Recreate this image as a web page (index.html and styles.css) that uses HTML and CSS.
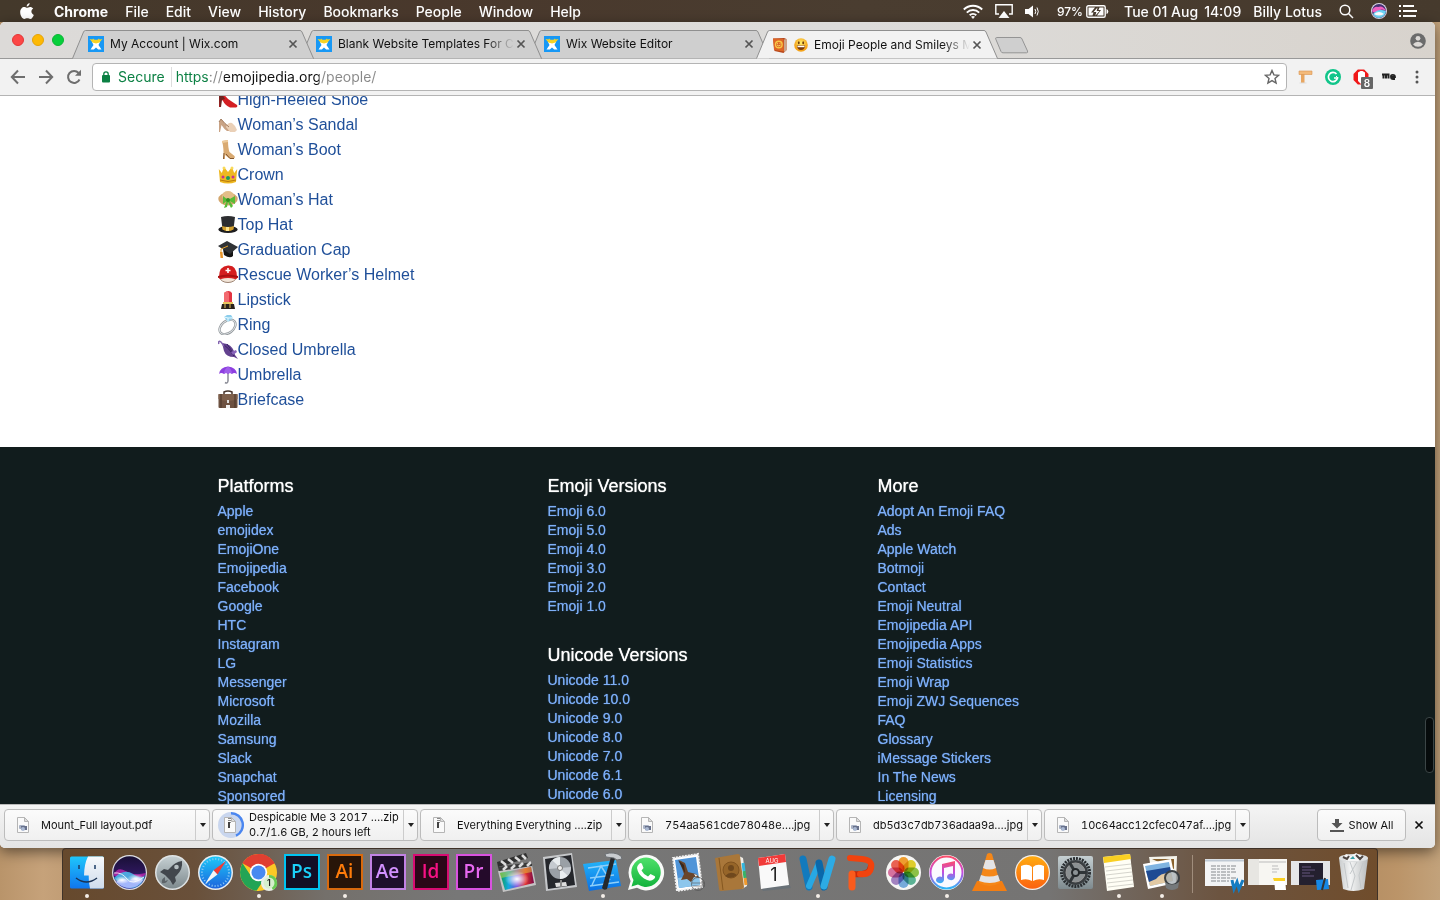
FILE: index.html
```html
<!DOCTYPE html>
<html lang="en">
<head>
<meta charset="utf-8">
<title>Emoji People and Smileys</title>
<link rel="stylesheet" href="styles.css">
</head>
<body>
<svg class="defs" aria-hidden="true">
  <defs>
    <symbol id="wix" viewBox="0 0 16 16">
      <rect width="16" height="16" fill="#1798f5"/>
      <path d="M4 6h8l-1.500 3L13.500 13.500h-3.300L8 11.500l-2.200 2H2.500L5.500 9z" fill="#fff"/>
      <path d="M1.500 3l3 .6L5 2.500l1.500 1.200h3L11 2.500l.5 1.100 3-.6-3 3.600L8 7.500 4.500 6.600z" fill="#f5d327"/>
    </symbol>
    <symbol id="tab-back" viewBox="0 0 242 29">
      <path d="M.5 28.500L11.500 2Q12.200.5 13.500.5H228Q229.300.5 230 2L241.500 28.500"/>
    </symbol>
    <symbol id="close" viewBox="0 0 10 10"><path d="M1.500 1.500l7 7M8.500 1.500l-7 7" stroke="currentColor" stroke-width="1.700" fill="none"/></symbol>
    <symbol id="file-img" viewBox="0 0 14 16">
      <path d="M1.500.5h7l4 4v11h-11z" fill="#fafafa" stroke="#b5b5b5"/><path d="M8.500.5v4h4z" fill="#ddd" stroke="#b5b5b5"/>
      <rect x="3" y="8" width="6" height="4" rx="1" fill="#a9b2c4"/><path d="M5 9h6v4H5z" fill="#68718b"/><circle cx="7" cy="12" r="2" fill="#aab9d3"/>
    </symbol>
    <symbol id="file-zip" viewBox="0 0 14 16">
      <path d="M1.500.5h7l4 4v11h-11z" fill="#fafafa" stroke="#b5b5b5"/><path d="M8.500.5v4h4z" fill="#ddd" stroke="#b5b5b5"/>
      <path d="M6.500 1v5" stroke="#888" stroke-width="3" stroke-dasharray="1 1"/><rect x="5" y="5" width="2" height="6" fill="#444"/>
    </symbol>
    <symbol id="caret" viewBox="0 0 6 4"><path d="M0 0h6L3 4z" fill="#222"/></symbol>
    <linearGradient id="gFinder" x2="0" y2="1"><stop stop-color="#1fc6fb"/><stop offset="1" stop-color="#1076ee"/></linearGradient>
    <linearGradient id="gFinder2" x2="0" y2="1"><stop stop-color="#f7f9fb"/><stop offset="1" stop-color="#cfdcec"/></linearGradient>
    <linearGradient id="gSilver" x2="0" y2="1"><stop stop-color="#c5cfd2"/><stop offset="1" stop-color="#7e8a8e"/></linearGradient>
    <linearGradient id="gSafari" x2="0" y2="1"><stop stop-color="#1cc8f8"/><stop offset="1" stop-color="#1c63dd"/></linearGradient>
    <linearGradient id="gGreen" x2="0" y2="1"><stop stop-color="#4fe06a"/><stop offset="1" stop-color="#12b33c"/></linearGradient>
    <linearGradient id="gBooks" x2="0" y2="1"><stop stop-color="#ffab10"/><stop offset="1" stop-color="#fb6210"/></linearGradient>
    <linearGradient id="gTunes" x2="0" y2="1"><stop stop-color="#fb4d6a"/><stop offset=".5" stop-color="#c34be0"/><stop offset="1" stop-color="#2fb6f6"/></linearGradient>
    <linearGradient id="gRainbow"><stop stop-color="#0b9f50"/><stop offset=".25" stop-color="#14a8e0"/><stop offset=".5" stop-color="#7a50e0"/><stop offset=".75" stop-color="#e2302c"/><stop offset="1" stop-color="#7a0a4a"/></linearGradient>
    <radialGradient id="gWhite"><stop stop-color="#fff"/><stop offset="1" stop-color="#fff" stop-opacity="0"/></radialGradient>
    <linearGradient id="gCode" x2="0" y2="1"><stop stop-color="#23b6fb"/><stop offset="1" stop-color="#0b6fe2"/></linearGradient>
    <linearGradient id="gSiri" x2="0" y2="1"><stop stop-color="#191036"/><stop offset=".45" stop-color="#2b1657"/><stop offset="1" stop-color="#2f3aa8"/></linearGradient>
    <linearGradient id="gTrash"><stop stop-color="#c9cccd"/><stop offset=".4" stop-color="#f3f4f4"/><stop offset="1" stop-color="#b9bcbd"/></linearGradient>
    <radialGradient id="gFace" cy=".35"><stop stop-color="#ffee6b"/><stop offset="1" stop-color="#f5a31a"/></radialGradient>
  </defs>
</svg>

<header class="menubar">
  <nav class="menus" aria-label="Menu bar">
    <button class="menu menu-apple" aria-label="Apple"><svg width="14" height="17" viewBox="0 0 14 17"><path d="M9.600 0c.2 1.600-1.200 3.500-2.900 3.500C6.500 1.900 8 .2 9.600 0zM7 4.800c.7 0 1.700-.9 3.100-.9 1.200 0 2.400.6 3.100 1.700-2.700 1.500-2.200 5.300.6 6.300-.5 1.500-1.900 4.100-3.500 4.100-1.200 0-1.600-.7-3-.7s-1.900.7-3 .7C2.200 16 .2 12.600.2 9.300c0-3.300 2-5.300 4.100-5.300 1.200 0 2.100.8 2.700.8z" fill="#fff"/></svg></button>
    <button class="menu menu-app">Chrome</button>
    <button class="menu">File</button>
    <button class="menu">Edit</button>
    <button class="menu">View</button>
    <button class="menu">History</button>
    <button class="menu">Bookmarks</button>
    <button class="menu">People</button>
    <button class="menu">Window</button>
    <button class="menu">Help</button>
  </nav>
  <div class="status">
    <svg width="20" height="15" viewBox="0 0 20 15" fill="none" stroke="#fff" stroke-width="1.900"><path d="M.8 5.500a13 13 0 0 1 18.400 0M3.800 8.600a8.800 8.800 0 0 1 12.400 0M6.700 11.300a4.700 4.700 0 0 1 6.600 0"/><path d="M10 15l-2-2.200a3 3 0 0 1 4 0z" fill="#fff" stroke="none"/></svg>
    <svg width="18" height="14" viewBox="0 0 18 14"><path d="M4 10H.8V.8h16.400V10H14" fill="none" stroke="#fff" stroke-width="1.400"/><path d="M9 7l5.500 7h-11z" fill="#fff"/></svg>
    <svg width="14" height="13" viewBox="0 0 14 13"><path d="M0 4h3.500L8 .5v12L3.500 9H0z" fill="#fff"/><path d="M10 4q1.500 2.500 0 5M12 2.500q2.500 4 0 8" fill="none" stroke="#fff"/></svg>
    <span class="charge">97% <svg width="23" height="13" viewBox="0 0 23 13"><rect x=".8" y=".8" width="18.400" height="11.400" rx="1.500" fill="none" stroke="#fff" stroke-width="1.400"/><path d="M2.500 2.500H9L5 7.500H7.500L6.500 10.500H2.500zM17.500 10.500H11l4-5.500H12.500l1-2.500h4z" fill="#fff"/><path d="M11.500 2.500L7.500 7h2.800l-1 3.800L13.500 6h-2.800z" fill="#fff"/><path d="M20.500 4v5q1.800-.5 1.800-2.500T20.500 4z" fill="#fff"/></svg></span>
    <span class="clock"><span>Tue 01 Aug</span><span>14:09</span></span>
    <span>Billy Lotus</span>
    <svg class="search" width="15" height="15" viewBox="0 0 15 15" fill="none" stroke="#fff" stroke-width="1.500"><circle cx="6" cy="6" r="4.800"/><path d="M9.500 9.500l4.500 4.500"/></svg>
    <svg width="16" height="16" viewBox="0 0 16 16"><circle cx="8" cy="8" r="8" fill="#dcd8ea"/><circle cx="8" cy="8" r="7" fill="#453073"/><path d="M1 8q2-5 6-4 5-2 8 4Q11 5 7 8T1 8z" fill="#f05fc0"/><path d="M2 11q5-6 13-3-1 6-7 7-4 0-6-4z" fill="#6fd7f7"/><path d="M3 11q5-4 10 0-5 3-10 0z" fill="#fff"/></svg>
    <svg width="18" height="12" viewBox="0 0 18 12" stroke="#fff" stroke-width="2"><path d="M0 1h2M4 1h11M0 6h2M4 6h14M0 11h2M4 11h13"/></svg>
  </div>
</header>

<main class="window">
  <div class="tabstrip">
    <div class="lights"><button class="light red" aria-label="Close window"></button><button class="light amber" aria-label="Minimise"></button><button class="light green" aria-label="Zoom"></button></div>
    <div class="tabs" role="tablist">
      <div class="tab t1" role="tab"><svg class="shape"><use href="#tab-back"/></svg><svg class="fav"><use href="#wix"/></svg><span class="title">My Account | Wix.com</span><button class="x" aria-label="Close tab"><svg width="10" height="10"><use href="#close"/></svg></button></div>
      <div class="tab t2" role="tab"><svg class="shape"><use href="#tab-back"/></svg><svg class="fav"><use href="#wix"/></svg><span class="title">Blank Website Templates For C</span><button class="x" aria-label="Close tab"><svg width="10" height="10"><use href="#close"/></svg></button></div>
      <div class="tab t3" role="tab"><svg class="shape"><use href="#tab-back"/></svg><svg class="fav"><use href="#wix"/></svg><span class="title">Wix Website Editor</span><button class="x" aria-label="Close tab"><svg width="10" height="10"><use href="#close"/></svg></button></div>
      <div class="tab active" role="tab" aria-selected="true"><svg class="shape"><use href="#tab-back"/></svg>
        <svg class="fav" viewBox="0 0 16 16"><path d="M1 1.500l11-.5 2.500 1V13l-3 3-9-2z" fill="#b5471b"/><path d="M1 1.500l10.500.5.5 12.500L2 13z" fill="#dd6526"/><path d="M12 2.500l2.500-.5v11.500L12 15z" fill="#c9a58c"/><circle cx="6.800" cy="7.500" r="3.300" fill="none" stroke="#f9c846" stroke-width="1.400"/><path d="M5 8q1.800 2 3.600 0M5.500 6v.8M8 6v.8" stroke="#f9d866" fill="none"/></svg>
        <span class="title"><svg class="smile" width="14" height="14" viewBox="0 0 14 14"><circle cx="7" cy="7" r="6.800" fill="url(#gFace)"/><ellipse cx="4.800" cy="4.800" rx=".9" ry="1.500" fill="#6d3b0c"/><ellipse cx="9.200" cy="4.800" rx=".9" ry="1.500" fill="#6d3b0c"/><path d="M2.800 7.500h8.400Q10.500 12 7 12T2.800 7.500z" fill="#7a3b10"/><path d="M3.500 7.800h7v1.400h-7z" fill="#fff"/></svg>Emoji People and Smileys M</span><button class="x" aria-label="Close tab"><svg width="10" height="10"><use href="#close"/></svg></button></div>
    </div>
    <button class="newtab" aria-label="New tab"><svg width="34" height="17" viewBox="0 0 34 17"><path d="M1.500.5H25Q26.500.5 27 2l5.500 12q.7 1.800-1 1.800H8Q6.500 15.800 6 14.500L.8 2.200Q.3.5 1.500.5z" fill="#cfcfcf" stroke="#949494"/></svg></button>
    <button class="avatar" aria-label="Profile"><svg width="16" height="16" viewBox="0 0 16 16"><circle cx="8" cy="8" r="7.800" fill="#6b6b6b"/><circle cx="8" cy="5.300" r="2.400" fill="#dcd9d6"/><path d="M3 11.300q1.800-2.500 5-2.500t5 2.500q-1.800 2.500-5 2.500t-5-2.500z" fill="#dcd9d6"/></svg></button>
  </div>

  <div class="toolbar">
    <div class="nav">
      <button aria-label="Back"><svg width="16" height="16" viewBox="0 0 16 16"><path d="M15 8H2M8 1.500L1.800 8 8 14.500"/></svg></button>
      <button aria-label="Forward"><svg width="16" height="16" viewBox="0 0 16 16"><path d="M1 8h13M8 1.500L14.200 8 8 14.500"/></svg></button>
      <button aria-label="Reload"><svg width="16" height="16" viewBox="0 0 16 16"><path d="M13.500 10.500A6 6 0 1 1 12.600 4"/><path d="M15 .8v6H9z" fill="#6e6e6e" stroke="none"/></svg></button>
    </div>
    <div class="omnibox">
      <svg width="8" height="12" viewBox="0 0 8 12"><rect y="4" width="8" height="7.500" rx="1" fill="#0b8043"/><path d="M1.800 5V3a2.200 2.200 0 0 1 4.400 0v2" fill="none" stroke="#0b8043" stroke-width="1.300"/></svg>
      <label class="secure" for="url">Secure</label>
      <input class="url" id="url" type="text" value="https://emojipedia.org/people/">
      <button class="star" aria-label="Bookmark"><svg width="16" height="16" viewBox="0 0 16 16"><path d="M8 1.500l1.900 4.400 4.700.4-3.600 3.100 1.100 4.700L8 11.600l-4.100 2.500L5 9.400 1.400 6.300l4.700-.4z" fill="none" stroke="#666" stroke-width="1.400"/></svg></button>
    </div>
    <div class="extensions">
      <button aria-label="Ruler"><svg width="16" height="16" viewBox="0 0 16 16"><path d="M4 3h3.500v11H4z" fill="#e8a661"/><path d="M2 2h13v3.500H2z" fill="#f3ba7b" stroke="#d99450" stroke-width=".6"/><path d="M2.500 14h7" stroke="#ddd"/></svg></button>
      <button aria-label="Grammar"><svg width="16" height="16" viewBox="0 0 16 16"><circle cx="8" cy="8" r="8" fill="#11c58a"/><path d="M11.500 5A4.600 4.600 0 1 0 12.500 9H9" fill="none" stroke="#fff" stroke-width="1.700"/><path d="M11 7l2 2-2 2" fill="none" stroke="#fff"/></svg></button>
      <button class="blocker" aria-label="Blocker"><svg width="16" height="16" viewBox="0 0 16 16"><path d="M4.800.5h6.400L15.500 5v6l-4.300 4.500H4.800L.5 11V5z" fill="#f01818"/><path d="M5 3.500L7.500 2h2L12 3.500V9l1.500 1-2 5H8L5 12z" fill="#fff"/></svg><span class="count">8</span></button>
      <button aria-label="We"><svg width="16" height="16" viewBox="0 0 16 16" fill="none" stroke="#222" stroke-width="2"><path d="M1 5.500h7.500M2.500 5v4.500M5 5v4.500M7.500 5v4.500"/><path d="M10 8h4q0-2.200-2.200-2.200T10 8q0 2 2.200 2h1.800" stroke-width="1.800"/></svg></button>
      <button aria-label="Menu"><svg width="4" height="16" viewBox="0 0 4 16" fill="#555"><circle cx="2" cy="3" r="1.500"/><circle cx="2" cy="8" r="1.500"/><circle cx="2" cy="13" r="1.500"/></svg></button>
    </div>
  </div>

  <section class="page">
    <ul class="emoji-list">
      <li><svg viewBox="0 0 20 20"><path d="M1 5l4-2q4 6 8 8l6 4q1 2-1 2.500h-6Q7 15 5 11l-2-2-1 8H1z" fill="#d41f24"/><path d="M1 5l3-1 3 5-3 1-1 7H1.500z" fill="#6e2420"/></svg><a href="#">High-Heeled Shoe</a></li>
      <li><svg viewBox="0 0 20 20"><path d="M1 7l2-3q4 5 8 8l5 4H9Q6 14 3.500 10L2 17H1z" fill="#c9a385"/><path d="M8 12q2-5 6-4 3 2 5 7l-2 2h-5z" fill="#ead0b7"/><path d="M1 7l2-3q4 5 8 8" stroke="#a27c60" fill="none"/></svg><a href="#">Woman’s Sandal</a></li>
      <li><svg viewBox="0 0 20 20"><path d="M4 1l6-1q0 8 1.500 12l5 4q1 2-1 2.500h-4L7 15v4H5.500Q6 8 4 1z" fill="#d9aa72"/><path d="M4 1l6-1v2l-5.500 1z" fill="#edcb9d"/><path d="M8 14l4 4.500h4M5.500 19L6 13" stroke="#84572e" fill="none"/></svg><a href="#">Woman’s Boot</a></li>
      <li><svg viewBox="0 0 20 20"><path d="M.8 4l3 4L6 2l4 5 4-5 2.200 6 3-4-1.200 13q-8 3-16 0z" fill="#eeb822"/><path d="M2 15q8 3 16 0" stroke="#b97a0b" fill="none"/><circle cx="6" cy="3" r="1.500" fill="#f8da5a"/><circle cx="14" cy="3" r="1.500" fill="#f8da5a"/><circle cx="10" cy="13" r="2" fill="#169a64"/><circle cx="5" cy="12" r="1.500" fill="#c9318f"/><circle cx="15" cy="12" r="1.500" fill="#c9318f"/></svg><a href="#">Crown</a></li>
      <li><svg viewBox="0 0 20 20"><ellipse cx="10" cy="9" rx="9.700" ry="6.500" fill="#d3a66c"/><ellipse cx="10" cy="6" rx="6" ry="5" fill="#e3be88"/><path d="M10 10L5 6v8zM10 10l7-4v8zM9 10l-3 8 3-1 1-5 3 6 2-2-4-6z" fill="#58bb36"/><circle cx="10" cy="10" r="2" fill="#2f8e1e"/></svg><a href="#">Woman’s Hat</a></li>
      <li><svg viewBox="0 0 20 20"><ellipse cx="10" cy="14.500" rx="9.700" ry="3.500" fill="#1d1d1f"/><path d="M3 2q7-2 14 0l-1.500 12q-5.500 3-11 0z" fill="#2d2e31"/><path d="M4 11q6 2 12 0l-.5 3.500q-5.500 3-11 0z" fill="#d4a02c"/><path d="M8 12h3v4H8z" fill="#ffe48b"/></svg><a href="#">Top Hat</a></li>
      <li><svg viewBox="0 0 20 20"><path d="M5 9l10 2v5q-3 3-9-1z" fill="#151515"/><path d="M0 6l9-5 11 6-8 7z" fill="#303235"/><path d="M10 6L3 9v5" stroke="#e4a12c" fill="none"/><path d="M2 12h2.500l.5 6H2.500z" fill="#e9952a"/></svg><a href="#">Graduation Cap</a></li>
      <li><svg viewBox="0 0 20 20"><ellipse cx="10" cy="12.500" rx="8" ry="5" fill="#f2e5d8" stroke="#9d8473"/><path d="M1 12Q1 1 10 .5T19 12q0 3-2 2-7-2-14 0-2 1-2-2z" fill="#d41e1f"/><path d="M0 11q10-3 20 0v2q-10-3-20 0z" fill="#a91010"/><path d="M10 3v5M7.500 5.500h5" stroke="#fff" stroke-width="1.600"/></svg><a href="#">Rescue Worker’s Helmet</a></li>
      <li><svg viewBox="0 0 20 20"><path d="M6 3q5-4 8 0v10H6z" fill="#e23442"/><path d="M6 3q3-3 5 0v9H6z" fill="#f36a70"/><path d="M5 12h10v3H5z" fill="#e8c45e"/><path d="M4 14h12l1 5H3z" fill="#2a221c"/><path d="M7 12v6M12 12v6" stroke="#e8c45e"/></svg><a href="#">Lipstick</a></li>
      <li><svg viewBox="0 0 20 20"><ellipse cx="9.500" cy="12" rx="9" ry="6" transform="rotate(-38 9.500 12)" fill="none" stroke="#8f9498" stroke-width="2.300"/><ellipse cx="9.500" cy="12" rx="9" ry="6" transform="rotate(-38 9.500 12)" fill="none" stroke="#dfe3e5"/><path d="M6 2l3-2h4l2 3-5 4z" fill="#8ccdec"/><path d="M6 2l4 1 5-.2M10 3v4" stroke="#e8fbff" fill="none"/></svg><a href="#">Ring</a></li>
      <li><svg viewBox="0 0 20 20"><path d="M4 3l5 1q7 3 8 11l3 4-4-2Q8 17 6 11z" fill="#63418f"/><path d="M5 4q6 4 11 12M9 4q4 5 7 12" stroke="#3c2366" fill="none"/><path d="M6 6L3 2Q0 0 .8 4" stroke="#8263af" stroke-width="1.500" fill="none"/><path d="M13 12l5-2 1 2-4 3z" fill="#8963bb"/></svg><a href="#">Closed Umbrella</a></li>
      <li><svg viewBox="0 0 20 20"><path d="M10 3v13q-.5 3-3 1.500" stroke="#8a8c96" stroke-width="1.500" fill="none"/><path d="M1 9Q2 2 10 1.500 18 2 19 9q-3-2-5 0-2-2-4 0-2-2-4 0-3-2-5 0z" fill="#8d3fe0"/><path d="M6 9q0-5 4-7.500Q14 4 14 9q-2-2-4 0-2-2-4 0z" fill="#a05eea"/></svg><a href="#">Umbrella</a></li>
      <li><svg viewBox="0 0 20 20"><path d="M6 4V2q4-2 8 0v2" stroke="#47352c" stroke-width="1.500" fill="none"/><rect x=".5" y="4" width="19" height="14" rx="1" fill="#6d5141"/><path d="M.5 4h19v5q-9.500 4-19 0z" fill="#7d5f4b"/><path d="M3 4v14M17 4v14" stroke="#4b362b"/><path d="M9 10h2v3H9z" fill="#ddd"/><path d="M8 15h4v3H8z" fill="#eee"/></svg><a href="#">Briefcase</a></li>
    </ul>
    <footer class="site-footer">
      <div class="columns">
        <div class="column">
          <h2>Platforms</h2>
          <ul><li><a href="#">Apple</a></li><li><a href="#">emojidex</a></li><li><a href="#">EmojiOne</a></li><li><a href="#">Emojipedia</a></li><li><a href="#">Facebook</a></li><li><a href="#">Google</a></li><li><a href="#">HTC</a></li><li><a href="#">Instagram</a></li><li><a href="#">LG</a></li><li><a href="#">Messenger</a></li><li><a href="#">Microsoft</a></li><li><a href="#">Mozilla</a></li><li><a href="#">Samsung</a></li><li><a href="#">Slack</a></li><li><a href="#">Snapchat</a></li><li><a href="#">Sponsored</a></li></ul>
        </div>
        <div class="column">
          <h2>Emoji Versions</h2>
          <ul><li><a href="#">Emoji 6.0</a></li><li><a href="#">Emoji 5.0</a></li><li><a href="#">Emoji 4.0</a></li><li><a href="#">Emoji 3.0</a></li><li><a href="#">Emoji 2.0</a></li><li><a href="#">Emoji 1.0</a></li></ul>
          <h2>Unicode Versions</h2>
          <ul><li><a href="#">Unicode 11.0</a></li><li><a href="#">Unicode 10.0</a></li><li><a href="#">Unicode 9.0</a></li><li><a href="#">Unicode 8.0</a></li><li><a href="#">Unicode 7.0</a></li><li><a href="#">Unicode 6.1</a></li><li><a href="#">Unicode 6.0</a></li></ul>
        </div>
        <div class="column">
          <h2>More</h2>
          <ul><li><a href="#">Adopt An Emoji FAQ</a></li><li><a href="#">Ads</a></li><li><a href="#">Apple Watch</a></li><li><a href="#">Botmoji</a></li><li><a href="#">Contact</a></li><li><a href="#">Emoji Neutral</a></li><li><a href="#">Emojipedia API</a></li><li><a href="#">Emojipedia Apps</a></li><li><a href="#">Emoji Statistics</a></li><li><a href="#">Emoji Wrap</a></li><li><a href="#">Emoji ZWJ Sequences</a></li><li><a href="#">FAQ</a></li><li><a href="#">Glossary</a></li><li><a href="#">iMessage Stickers</a></li><li><a href="#">In The News</a></li><li><a href="#">Licensing</a></li></ul>
        </div>
      </div>
    </footer>
    <div class="thumb"></div>
  </section>

  <div class="downloads">
    <div class="download"><button class="file"><svg class="ficon"><use href="#file-img"/></svg><span>Mount_Full layout.pdf</span></button><button class="more" aria-label="Options"><svg><use href="#caret"/></svg></button></div>
    <div class="download"><button class="file"><svg class="progress" width="26" height="26" viewBox="0 0 26 26"><circle cx="13" cy="13" r="13" fill="#c9d6ee"/><path d="M13 1.200A11.800 11.800 0 0 1 18 23.700" fill="none" stroke="#4a86f0" stroke-width="2.400"/><use href="#file-zip" x="5" y="5" width="14" height="16"/></svg><span>Despicable Me 3 2017 ….zip<br>0.7/1.6 GB, 2 hours left</span></button><button class="more" aria-label="Options"><svg><use href="#caret"/></svg></button></div>
    <div class="download"><button class="file"><svg class="ficon"><use href="#file-zip"/></svg><span>Everything Everything ….zip</span></button><button class="more" aria-label="Options"><svg><use href="#caret"/></svg></button></div>
    <div class="download"><button class="file"><svg class="ficon"><use href="#file-img"/></svg><span>754aa561cde78048e….jpg</span></button><button class="more" aria-label="Options"><svg><use href="#caret"/></svg></button></div>
    <div class="download"><button class="file"><svg class="ficon"><use href="#file-img"/></svg><span>db5d3c7db736adaa9a….jpg</span></button><button class="more" aria-label="Options"><svg><use href="#caret"/></svg></button></div>
    <div class="download"><button class="file"><svg class="ficon"><use href="#file-img"/></svg><span>10c64acc12cfec047af….jpg</span></button><button class="more" aria-label="Options"><svg><use href="#caret"/></svg></button></div>
    <button class="show-all"><svg width="14" height="13" viewBox="0 0 14 13" fill="#555"><path d="M5 0h4v4h3.500L7 9.500 1.500 4H5zM0 11h14v2H0z"/></svg>Show All</button>
    <button class="dismiss" aria-label="Close downloads"><svg width="10" height="10"><use href="#close"/></svg></button>
  </div>
</main>

<nav class="dock" aria-label="Dock">
  <button class="app running" aria-label="Finder"><svg viewBox="0 0 43 51"><rect x="5" y="7.500" width="34" height="32" rx="1.500" fill="url(#gFinder)"/><path d="M23 7.500h14.500q1.500 0 1.500 1.500v29q0 1.500-1.500 1.500H25q-1.500-6-1.300-13H19Q19.200 15 23 7.500z" fill="url(#gFinder2)"/><path d="M14 16v4M30 16v4" stroke="#1b3c66" stroke-width="1.500"/><path d="M11 29q10.500 8 21 0" fill="none" stroke="#1b3252" stroke-width="1.500"/></svg></button>
  <button class="app" aria-label="Siri"><svg viewBox="0 0 43 51"><circle cx="21.500" cy="23.500" r="17.500" fill="#dcdde3"/><circle cx="21.500" cy="23.500" r="16.300" fill="url(#gSiri)"/><path d="M5.500 26q4-9 12-4t20.500 2q-3 8-16 7t-16.500-5z" fill="#c728b4" opacity=".75"/><path d="M6 29q10-10 19-4t12 1q-2 9-9 12-11 4-22-9z" fill="#39c8ee" opacity=".8"/><path d="M8 33q6-6 13-1 7-7 14-1-4 7-13 8-8 0-14-6z" fill="#a2b6fb"/><ellipse cx="14" cy="31" rx="8" ry="4" fill="url(#gWhite)"/><ellipse cx="28" cy="30" rx="9" ry="5" fill="url(#gWhite)"/><path d="M6 24q8-1 13 6t17-2" stroke="#fff" fill="none" opacity=".8"/></svg></button>
  <button class="app" aria-label="Launchpad"><svg viewBox="0 0 43 51"><circle cx="21.500" cy="23.500" r="17.500" fill="#dfe3e4"/><circle cx="21.500" cy="23.500" r="16" fill="url(#gSilver)"/><path d="M31 12q1 8-5 14l-2 2 1 4-3 4-3-5-5-5-5-3 4-3 4 1 2-2q5-6 12-7z" fill="#42474d"/><circle cx="25.500" cy="18" r="2.300" fill="#b6bfc2"/><path d="M14 28q-4 2-3 6 4 1 6-3l-3 1z" fill="#5d6469"/></svg></button>
  <button class="app" aria-label="Safari"><svg viewBox="0 0 43 51"><circle cx="21.500" cy="23.500" r="17.500" fill="#e9edf0"/><circle cx="21.500" cy="23.500" r="16" fill="url(#gSafari)"/><circle cx="21.500" cy="23.500" r="13.500" fill="none" stroke="#8fccf5" stroke-width="2" stroke-dasharray="1 2"/><path d="M32 12L19.500 21.300l4 4.200z" fill="#f13b35"/><path d="M11 35l8.500-13.700 4 4.200z" fill="#f3f5f6"/></svg></button>
  <button class="app running" aria-label="Chrome"><svg viewBox="0 0 43 51"><circle cx="21.500" cy="23.500" r="18.500" fill="#fbc926"/><path d="M21.500 23.500L5.500 14.200a18.500 18.500 0 0 1 32 0z" fill="#df3f31"/><path d="M21.500 5a18.500 18.500 0 0 1 16.100 9.500H21.500z" fill="#df3f31"/><path d="M5.500 14.200a18.500 18.500 0 0 0 14 27.600L28 29 14 27z" fill="#23a455"/><circle cx="21.500" cy="23.500" r="8.700" fill="#fff"/><circle cx="21.500" cy="23.500" r="7" fill="#4889f1"/><circle cx="32" cy="34" r="8" fill="#e9efe8"/><path d="M32 26a8 8 0 0 1 4 15l-4-7z" fill="#67ca53"/><circle cx="32" cy="34" r="5.500" fill="#d5efcd"/><text x="32" y="37" class="badge">1</text></svg></button>
  <button class="app" aria-label="Photoshop"><svg viewBox="0 0 43 51"><rect x="5" y="6" width="34" height="34" fill="#120f26" stroke="#00c4f2" stroke-width="2"/><text x="21.500" y="29" class="adobe" fill="#1bd0fa">Ps</text></svg></button>
  <button class="app running" aria-label="Illustrator"><svg viewBox="0 0 43 51"><rect x="5" y="6" width="34" height="34" fill="#281509" stroke="#d96a0e" stroke-width="2"/><text x="21.500" y="29" class="adobe" fill="#ff7c0a">Ai</text></svg></button>
  <button class="app" aria-label="After Effects"><svg viewBox="0 0 43 51"><rect x="5" y="6" width="34" height="34" fill="#1e0f2c" stroke="#c182e4" stroke-width="2"/><text x="21.500" y="29" class="adobe" fill="#d291ff">Ae</text></svg></button>
  <button class="app" aria-label="InDesign"><svg viewBox="0 0 43 51"><rect x="5" y="6" width="34" height="34" fill="#2b0718" stroke="#d70c72" stroke-width="2"/><text x="21.500" y="29" class="adobe" fill="#f81184">Id</text></svg></button>
  <button class="app" aria-label="Premiere"><svg viewBox="0 0 43 51"><rect x="5" y="6" width="34" height="34" fill="#240a2a" stroke="#d952e0" stroke-width="2"/><text x="21.500" y="29" class="adobe" fill="#e768f0">Pr</text></svg></button>
  <button class="app" aria-label="Final Cut"><svg viewBox="0 0 43 51"><path d="M3 22l34-6 4 20-33 7z" fill="#c4c4c4"/><path d="M5 24l31-6 3 16-29 7z" fill="url(#gRainbow)"/><path d="M5 24l31-6 1 5-31 6z" fill="#e8e03a" opacity=".45"/><ellipse cx="22" cy="30" rx="12" ry="8" fill="url(#gWhite)"/><path d="M2 13L31 4l2 5-30 9z" fill="#303030"/><path d="M3 18l34-5v4L4 22z" fill="#3b3b3b"/><path d="M6 12l5 4M13 10l5 4M20 8l5 4M27 6l4 4M8 21l4-4M16 20l4-4M24 18l4-4M32 17l4-4" stroke="#ddd" stroke-width="2.500"/></svg></button>
  <button class="app" aria-label="Logic"><svg viewBox="0 0 43 51"><path d="M5 8l29-4 5 34-31 4z" fill="#c5c7ca"/><path d="M7 10l26-4 4 30-27 4z" fill="#25272c"/><circle cx="22" cy="19" r="11" fill="#9aa0a6"/><path d="M22 19L14 11.500A11 11 0 0 1 22 8zM22 19l8 7.500A11 11 0 0 1 22 30z" fill="#e8ecef"/><path d="M22 19l11-1a11 11 0 0 1-3 8.500zM22 19l-11 1a11 11 0 0 1 3-8.500z" fill="#c5cad0"/><circle cx="22" cy="19" r="2.500" fill="#eee" stroke="#777"/><path d="M17 34l11-1 1 4-11 1z" fill="#ddd"/><path d="M23 31v7" stroke="#888" stroke-width="2"/></svg></button>
  <button class="app running" aria-label="Xcode"><svg viewBox="0 0 43 51"><path d="M2 15l33-4 5 26-32 5z" fill="url(#gCode)"/><path d="M11 36l9-19 9 14M9 29l24-3M7 19l28-4M9 37l29-4" stroke="#8fd0fa" stroke-width="1.500" fill="none"/><path d="M30 8l4 1-8 31q-3 2-5-1z" fill="#25292d"/><path d="M24 5q9-3 16 2l1 3-5 1-3-2-8-1z" fill="#c8ccd0" stroke="#6d7175"/></svg></button>
  <button class="app" aria-label="WhatsApp"><svg viewBox="0 0 43 51"><path d="M4 41l2.600-9A17.800 17.800 0 1 1 13 38.800z" fill="#f8faf8"/><path d="M7.500 37.500l2-6.500A14.700 14.700 0 1 1 14 35.600z" fill="url(#gGreen)"/><path d="M15 15q2-2 3 0l1.500 4-2 2.500q2 4 6.500 6l2.500-2.500 4 2q1.500 1-.5 3-4 3.500-10-.5T13 19q0-2 2-4z" fill="#fff"/></svg></button>
  <button class="app" aria-label="Mail"><svg viewBox="0 0 43 51"><path d="M6 9l25-4 4 33-25 4z" fill="#fff" stroke="#eee" stroke-width="2" stroke-dasharray="2 1"/><path d="M8 11l21-3 4 28-21 3z" fill="#4f94d8"/><path d="M11 29l21-3 1 10-21 3z" fill="#8cc6ec"/><path d="M12 11l6 3 3 9 8 2 4 4-6-1-3 5-4-3-6 1 3-6z" fill="#69452b"/><path d="M11 11l6 5 1 8z" fill="#38281f"/><path d="M27 25l3 1-1 2z" fill="#fff"/><circle cx="31" cy="35" r="6.500" fill="none" stroke="#555" opacity=".7"/><path d="M25 34h13M26 37h12" stroke="#555" opacity=".6"/></svg></button>
  <button class="app" aria-label="Contacts"><svg viewBox="0 0 43 51"><path d="M29 7l4 2 4 28-5 3z" fill="#f0eee9"/><path d="M33 14l1 8" stroke="#35b7df" stroke-width="3"/><path d="M34 22l1 7" stroke="#38b368" stroke-width="3"/><path d="M35 29l1 7" stroke="#f19a2e" stroke-width="3"/><path d="M5 9l23-4q2 0 2 2l4 31q0 2-2 2l-21 2q-2 0-2-2z" fill="#a9773a"/><path d="M9 9l4 32" stroke="#855820"/><circle cx="21" cy="21" r="8" fill="#966529" stroke="#805320"/><circle cx="21" cy="19" r="3" fill="#6f481d"/><path d="M15 27q6-6 12-1-6 5-12 1z" fill="#6f481d"/></svg></button>
  <button class="app" aria-label="Calendar"><svg viewBox="0 0 43 51"><path d="M7 36l29-1 2 4-28 3z" fill="#697177"/><path d="M5 9l27-4 4 31-28 4z" fill="#f9f9f9"/><path d="M5 9l27-4 1 8-27 4z" fill="#f13a39"/><text x="19" y="14" class="month">AUG</text><text x="21" y="32" class="day">1</text></svg></button>
  <button class="app running" aria-label="Word"><svg viewBox="0 0 43 51" fill="none" stroke-linecap="round" stroke-linejoin="round"><path d="M7 10l6 28" stroke="#127abd" stroke-width="7"/><path d="M13 37l10-23" stroke="#27a8e4" stroke-width="6"/><path d="M23 14l5 24" stroke="#0a68aa" stroke-width="7"/><path d="M28 37l8-27" stroke="#2dabe5" stroke-width="7"/></svg></button>
  <button class="app" aria-label="PowerPoint"><svg viewBox="0 0 43 51" fill="none" stroke-linecap="round"><path d="M14 25Q31 27 32 17" stroke="#c82909" stroke-width="6"/><path d="M11 9l12 1q11 1 9 9-1 7-11 6" stroke="#f1430e" stroke-width="6"/><path d="M13 25v13" stroke="#fb5b1c" stroke-width="7"/></svg></button>
  <button class="app" aria-label="Photos"><svg viewBox="0 0 43 51"><circle cx="21.500" cy="23.500" r="17.500" fill="#f6f6f4"/><g class="petals"><rect x="16.500" y="8" width="10" height="15" rx="5" fill="#f7a331"/><rect x="16.500" y="8" width="10" height="15" rx="5" transform="rotate(45 21.500 23.500)" fill="#e6d52f"/><rect x="16.500" y="8" width="10" height="15" rx="5" transform="rotate(90 21.500 23.500)" fill="#91c849"/><rect x="16.500" y="8" width="10" height="15" rx="5" transform="rotate(135 21.500 23.500)" fill="#5eb99b"/><rect x="16.500" y="8" width="10" height="15" rx="5" transform="rotate(180 21.500 23.500)" fill="#7bb0e4"/><rect x="16.500" y="8" width="10" height="15" rx="5" transform="rotate(225 21.500 23.500)" fill="#a888c9"/><rect x="16.500" y="8" width="10" height="15" rx="5" transform="rotate(270 21.500 23.500)" fill="#dd76a6"/><rect x="16.500" y="8" width="10" height="15" rx="5" transform="rotate(315 21.500 23.500)" fill="#f26756"/></g></svg></button>
  <button class="app running" aria-label="iTunes"><svg viewBox="0 0 43 51"><circle cx="21.500" cy="23.500" r="17.500" fill="#fff"/><circle cx="21.500" cy="23.500" r="16" fill="#fbfaff" stroke="url(#gTunes)" stroke-width="2"/><path d="M17 15l13-3v16a4 3.300 0 1 1-2-3v-8l-9 2v12a4 3.300 0 1 1-2-3z" fill="url(#gTunes)"/></svg></button>
  <button class="app" aria-label="VLC"><svg viewBox="0 0 43 51"><path d="M9 32h25l5 10H4z" fill="#f37e12"/><path d="M19 5q2.500-2 5 0l8 29q-10.500 6-21 0z" fill="#f58718"/><path d="M17.500 11h8l2.500 8q-6.500 3-13 0zM13 26q8 3 17 0l2 6q-10 4-21 0z" fill="#e4e4e6"/></svg></button>
  <button class="app" aria-label="iBooks"><svg viewBox="0 0 43 51"><circle cx="21.500" cy="23.500" r="17.500" fill="#f3efeb"/><circle cx="21.500" cy="23.500" r="16.300" fill="url(#gBooks)"/><path d="M10 17q7-3 11 1v14q-5-3-11-1zM33 17q-7-3-11 1v14q5-3 11-1z" fill="#fff"/></svg></button>
  <button class="app" aria-label="Settings"><svg viewBox="0 0 43 51"><rect x="4" y="7" width="35" height="33" rx="2" fill="url(#gSilver)"/><circle cx="21.500" cy="23.500" r="14" fill="none" stroke="#292d30" stroke-width="3" stroke-dasharray="2 1"/><circle cx="21.500" cy="23.500" r="12.500" fill="#3b3f42"/><circle cx="21.500" cy="23.500" r="9.500" fill="#8b9092" stroke="#999"/><path d="M21.500 23.500h11M21.500 23.500l-6-10M21.500 23.500l-6 10" stroke="#303538" stroke-width="3"/><circle cx="21.500" cy="23.500" r="3.500" fill="#8b9295" stroke="#24282a" stroke-width="2"/></svg></button>
  <button class="app running" aria-label="Notes"><svg viewBox="0 0 43 51"><path d="M6 8l27-3 4 33-27 4z" fill="#fffef5"/><path d="M6 8l27-3 1 5-27 4z" fill="#f9cf22"/><path d="M8 18l26-3M9 22l26-3M9 26l26-3M10 30l26-3M10 34l26-3M11 38l26-3" stroke="#d6d5cd"/></svg></button>
  <button class="app running" aria-label="Preview"><svg viewBox="0 0 43 51"><path d="M9 8l28-1-1 29H14z" fill="#f4f3eb"/><path d="M12 10h22v10z" fill="#89622d"/><path d="M3 15l28-5 5 24-28 6z" fill="#fff"/><path d="M5 17l24-4 4 19-23 5z" fill="#7fb4e1"/><path d="M7 26l24-4 2 10-23 5z" fill="#e2c9a3"/><path d="M6 22l24-4 1 6q-10-1-15 6l-7 3z" fill="#1e4a93"/><circle cx="32" cy="29" r="7" fill="#a7afb3" fill-opacity=".75" stroke="#3b3f42" stroke-width="2"/><path d="M25 33q7 5 14 0l-1 6q-6 4-12 0z" fill="#75797b"/></svg></button>
  <span class="divider"></span>
  <button class="app" aria-label="Document"><svg viewBox="0 0 43 51"><path d="M2 10h39v27H2z" fill="#f3f4f5"/><path d="M2 11.500h39" stroke="#bfc9d4" stroke-width="2"/><path d="M8 17h26M8 20h24M8 23h26M8 26h20M8 29h25M8 32h18" stroke="#85898d" stroke-dasharray="5 1 3 1"/><path d="M29 31l2 9 3-7 2 7 4-9" fill="none" stroke="#147cc2" stroke-width="3"/></svg></button>
  <button class="app" aria-label="Note"><svg viewBox="0 0 43 51"><path d="M2 10h39v26H2z" fill="#f7f6f2"/><path d="M2 10h11v26H2z" fill="#e7e6e2"/><path d="M13 13h27M26 17h6M26 20h7M26 23h5" stroke="#bbb"/><path d="M28 29h11l1 12H29z" fill="#fff"/><path d="M27 29h12v3H28z" fill="#fbd024"/></svg></button>
  <button class="app" aria-label="Project"><svg viewBox="0 0 43 51"><path d="M2 12h39v24H2z" fill="#e5e6e8"/><path d="M10 14h24v22H10z" fill="#24202f"/><path d="M13 18h9M13 21h13M13 24h8M13 27h12" stroke="#675780"/><path d="M27 31l12-1 1 10-12 1z" fill="#1588e6"/><path d="M36 29l-3 12" stroke="#333" stroke-width="2"/></svg></button>
  <button class="app" aria-label="Trash"><svg viewBox="0 0 43 51"><path d="M7 9h29l-4 31q-10.500 4-21 0z" fill="url(#gTrash)"/><path d="M12 14l4 25M31 14l-4 12 2 13M18 13l5 14-4 14M25 13l-7 12" stroke="#c4c8ca" fill="none"/><ellipse cx="21.500" cy="9" rx="14.500" ry="4" fill="#dcdfe0"/><path d="M11 9l3-4 5 2 5-3 5 3 3 2-6 3H15z" fill="#f6f6f6"/><path d="M11 8l4 2 2-3M24 6l4 4 3-3" stroke="#4e4642" stroke-width="2" fill="none"/><path d="M18 10l3-3 2 3z" fill="#3aa0a5"/></svg></button>
</nav>
</body>
</html>
```

FILE: styles.css
```css
* { box-sizing: border-box; }
html, body { height: 100%; }
body {
  margin: 0;
  display: flex;
  flex-direction: column;
  overflow: hidden;
  font-family: Inter, Roboto, sans-serif;
  background: linear-gradient(90deg, #b9946a, #c6a27a 3%, #8d6b48 20%, #8d6b48 80%, #bb9468 97%, #c2a27b);
}
button { padding: 0; border: 0; background: none; font: inherit; color: inherit; }
svg { display: block; flex: none; }
ul { list-style: none; margin: 0; padding: 0; }
a { color: inherit; text-decoration: none; }
.defs { position: absolute; width: 0; height: 0; }

.menubar {
  flex: none;
  height: 22px;
  display: flex;
  justify-content: space-between;
  padding: 0 23px 0 20px;
  color: #fff;
  font-size: 14px;
  font-weight: 500;
  background: linear-gradient(90deg, #44392b, #49382c 30%, #4a3d30 60%, #463a2d);
}
.menus, .status { display: flex; align-items: center; white-space: nowrap; }
.menus { gap: 17px; }
.menu-apple { margin-right: 3px; }
.menu-app { font-weight: 700; }
.status { gap: 12px; }
.charge { display: flex; align-items: center; gap: 3px; font-size: 12px; padding: 0 3px 0 6px; }
.clock { display: flex; gap: 6px; }
.search { margin: 0 5px; }

.window {
  flex: 1;
  min-height: 0;
  display: flex;
  flex-direction: column;
  margin-right: 5px;
  border-radius: 5px;
  overflow: hidden;
  background: #fff;
  box-shadow: 0 4px 14px rgba(0, 0, 0, .5);
}
.tabstrip {
  flex: none;
  height: 37px;
  display: flex;
  align-items: flex-end;
  padding: 0 9px 0 12px;
  background: linear-gradient(90deg, #dcdad8, #dddcda 60%, #d8d3cd);
  border-bottom: 1px solid #999;
}
.lights { display: flex; gap: 8px; align-self: center; width: 60px; }
.light { width: 12px; height: 12px; border-radius: 50%; }
.red { background: #fc4746; border: 1px solid #e33636; }
.amber { background: #fdb904; border: 1px solid #e5a308; }
.green { background: #06cf3b; border: 1px solid #0cb535; }
.tabs { display: flex; margin-bottom: -1px; }
.tab {
  position: relative;
  width: 242px;
  height: 29px;
  display: flex;
  align-items: center;
  padding: 0 14px 0 16px;
  font-size: 12px;
  color: #111;
}
.tab + .tab { margin-left: -14px; }
.t1 { z-index: 3; }
.t2 { z-index: 2; }
.t3 { z-index: 1; }
.active { z-index: 4; }
.shape { position: absolute; inset: 0; width: 242px; height: 29px; fill: #cfcfcf; stroke: #8f8f8f; z-index: -1; }
.tab:not(.active) { border-bottom: 1px solid #999; }
.active .shape { fill: #f2f2f2; }
.fav { width: 16px; height: 16px; margin-right: 6px; }
.title {
  flex: 1;
  min-width: 0;
  display: flex;
  align-items: center;
  gap: 6px;
  overflow: hidden;
  white-space: nowrap;
  line-height: 18px;
  mask-image: linear-gradient(90deg, #000 calc(100% - 28px), transparent);
}
.x { width: 14px; height: 14px; display: grid; place-items: center; color: #555; }
.newtab { margin: 0 auto 4px -3px; }
.avatar { margin: 0 0 9px; }

.toolbar {
  flex: none;
  display: flex;
  align-items: center;
  padding: 4px 16px 5px 10px;
  height: 37px;
  background: #f2f2f2;
  border-bottom: 1px solid #b4b4b4;
}
.nav { display: flex; gap: 12px; margin-right: 10px; }
.nav svg { fill: none; stroke: #6e6e6e; stroke-width: 2; }
.omnibox {
  flex: 1;
  height: 28px;
  display: flex;
  align-items: center;
  padding: 0 6px 0 9px;
  background: #fff;
  border: 1px solid #b4b4b4;
  border-radius: 4px;
  font-size: 14px;
}
.secure { color: #0b8043; margin-left: 8px; padding-right: 6px; border-right: 1px solid #ddd; line-height: 20px; }
.url {
  flex: 1;
  min-width: 0;
  height: 24px;
  padding: 0 0 0 4px;
  border: 0;
  outline: 0;
  font: inherit;
  color: transparent;
  background: linear-gradient(90deg, #0b8043 38px, #888 38px, #888 52px, #111 52px, #111 147px, #888 147px);
  background-clip: text;
  -webkit-background-clip: text;
}
.extensions { display: flex; align-items: center; gap: 12px; margin-left: 10px; }
.blocker { position: relative; }
.count {
  position: absolute;
  left: 8px;
  top: 8px;
  width: 12px;
  height: 12px;
  font-size: 10px;
  line-height: 12px;
  font-weight: 600;
  color: #fff;
  background: #666;
  border-radius: 1px;
}
.extensions button:last-child { margin-left: 6px; }

.page {
  position: relative;
  flex: 1;
  min-height: 0;
  display: flex;
  flex-direction: column;
  overflow: hidden;
  font-family: "Liberation Sans", Arial, sans-serif;
}
.emoji-list {
  width: 100%;
  max-width: 1000px;
  margin: -9px auto 35px;
  color: #1f4f99;
  font-size: 16px;
  line-height: 25px;
}
.emoji-list li { display: flex; align-items: center; }
.emoji-list svg { width: 20px; height: 20px; }
.site-footer { flex: 1 0 auto; padding-top: 26px; background: #111c1d; }
.columns {
  max-width: 1000px;
  margin: 0 auto;
  padding-right: 10px;
  display: grid;
  grid-template-columns: repeat(3, 1fr);
}
.column h2 { margin: 0 0 3px; font-size: 18px; font-weight: 400; line-height: 26px; color: #fff; text-shadow: 0 0 1px #fff; }
.column ul + h2 { margin-top: 26px; }
.column ul { font-size: 14px; line-height: 19px; color: #7fb0f7; text-shadow: 0 0 1px #5a8ee0; }
.thumb {
  position: absolute;
  right: 1px;
  bottom: 31px;
  width: 9px;
  height: 56px;
  border: 1px solid #3b4546;
  border-radius: 4px;
  background: #060b0c;
}

.downloads {
  flex: none;
  height: 44px;
  display: flex;
  align-items: center;
  gap: 2px;
  padding: 0 11px 3px 4px;
  background: linear-gradient(#f4f4f4, #e4e4e4);
  border-top: 1px solid #b9b9b9;
  font-size: 11px;
  font-variant-numeric: tabular-nums;
  line-height: 15px;
  color: #111;
}
.download {
  width: 206px;
  height: 32px;
  display: flex;
  border: 1px solid #bcbcbc;
  border-radius: 4px;
  background: linear-gradient(#fbfbfb, #f0f0f0);
}
.file { flex: 1; min-width: 0; display: flex; align-items: center; padding-left: 5px; gap: 5px; text-align: left; white-space: nowrap; }
.ficon { width: 14px; height: 16px; margin: 0 6px; }
.more { width: 14px; border-left: 1px solid #ccc; display: grid; place-items: center; }
.more svg { width: 6px; height: 4px; }
.show-all {
  display: flex;
  align-items: center;
  justify-content: center;
  gap: 5px;
  width: 89px;
  height: 32px;
  margin: 0 6px 0 auto;
  border: 1px solid #bcbcbc;
  border-radius: 4px;
  background: linear-gradient(#fbfbfb, #f0f0f0);
}
.dismiss { color: #111; }

.dock {
  flex: none;
  align-self: center;
  display: flex;
  height: 52px;
  margin-right: 1px;
  padding: 0 2px;
  border: solid #3f3228;
  border-width: 1px 1px 0;
  border-radius: 4px 4px 0 0;
  background: linear-gradient(90deg, #66492d, #69503a 10%, #74706b 20%, #777 30%, #757473 75%, #6c5440 88%, #704d2c);
}
.app { position: relative; width: 43px; height: 51px; }
.app svg { width: 43px; height: 51px; }
.running::after {
  content: "";
  position: absolute;
  left: 20px;
  top: 45px;
  width: 4px;
  height: 4px;
  border-radius: 50%;
  background: #f4eee8;
}
.divider { width: 20px; height: 38px; margin-top: 6px; background: linear-gradient(#a08d7c, #a08d7c) center / 1px 100% no-repeat; }
.petals rect { mix-blend-mode: multiply; }
.badge { font: 600 9px Inter, sans-serif; text-anchor: middle; fill: #222; }
.adobe { font: 600 19px "Open Sans", sans-serif; text-anchor: middle; }
.month { font: 6px Inter, sans-serif; text-anchor: middle; fill: #fff; }
.day { font: 18px Inter, sans-serif; text-anchor: middle; fill: #222; }
```
